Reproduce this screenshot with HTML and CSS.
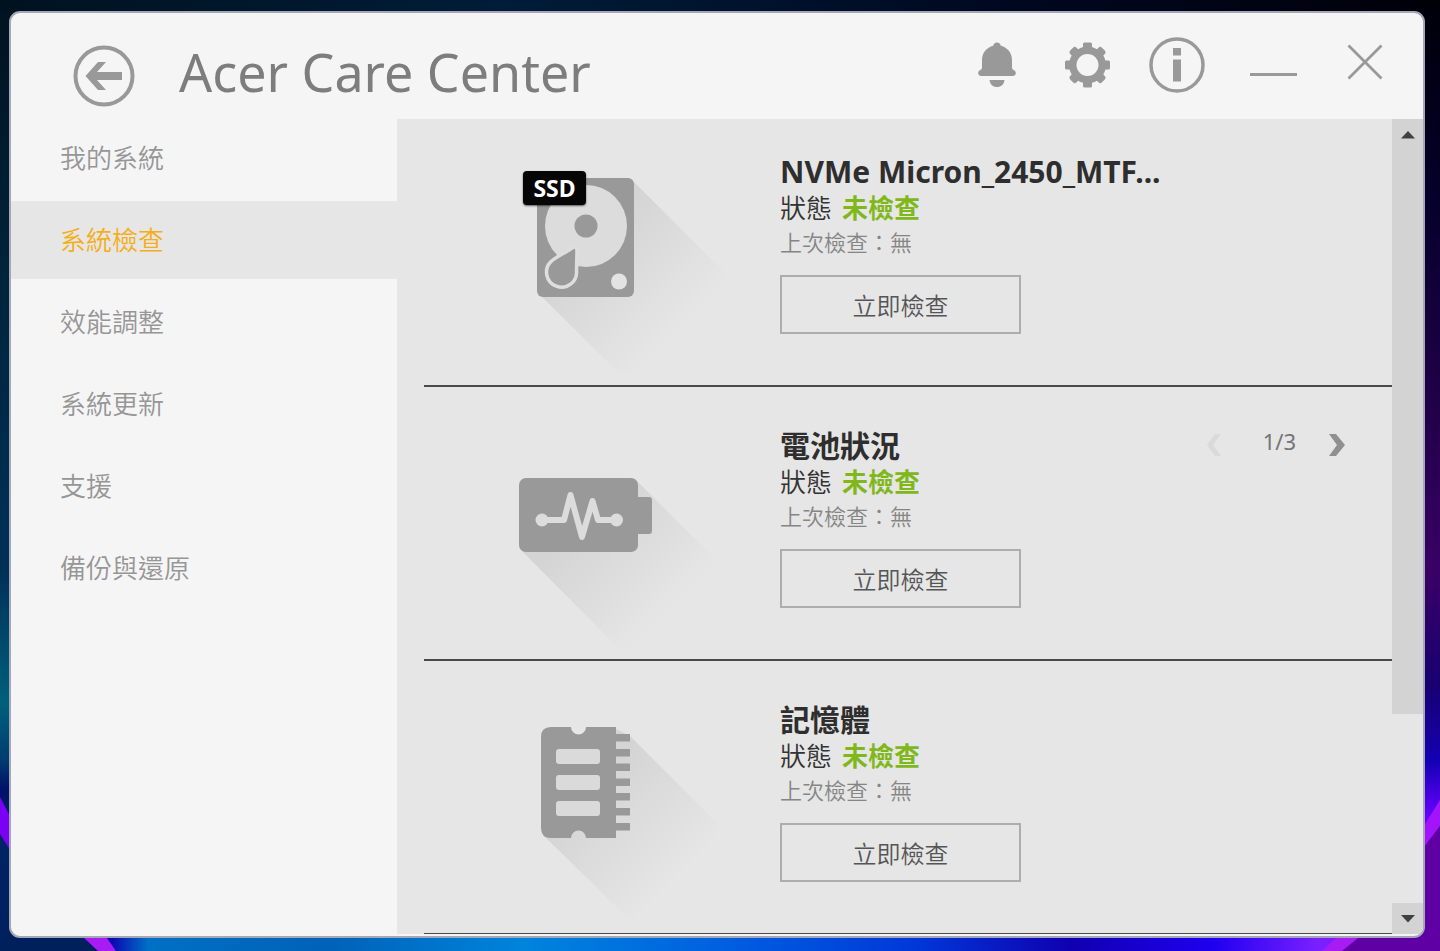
FILE: index.html
```html
<!DOCTYPE html>
<html lang="zh-Hant">
<head>
    <meta charset="UTF-8">
    <meta name="viewport" content="width=device-width, initial-scale=1.0">
    <title>Acer Care Center</title>
    <link rel="stylesheet" href="styles.css">
</head>
<body>
    <!-- Desktop wallpaper -->
    <svg class="wallpaper" viewBox="0 0 1440 951" preserveAspectRatio="none" aria-hidden="true">
        <defs>
            <linearGradient id="wallLeft" x1="0" y1="0" x2="0" y2="1">
                <stop offset="0" stop-color="#00121f"/>
                <stop offset="0.3" stop-color="#00243c"/>
                <stop offset="0.6" stop-color="#003058"/>
                <stop offset="0.74" stop-color="#00607c"/>
                <stop offset="0.8" stop-color="#003c70"/>
                <stop offset="0.83" stop-color="#00106a"/>
                <stop offset="0.86" stop-color="#002468"/>
                <stop offset="1" stop-color="#00205c"/>
            </linearGradient>
            <linearGradient id="wallRight" x1="0" y1="0" x2="0" y2="1">
                <stop offset="0" stop-color="#000008"/>
                <stop offset="0.2" stop-color="#04002a"/>
                <stop offset="0.45" stop-color="#24004c"/>
                <stop offset="0.6" stop-color="#3a0066"/>
                <stop offset="0.72" stop-color="#180070"/>
                <stop offset="0.8" stop-color="#1400b4"/>
                <stop offset="0.86" stop-color="#6a00ff"/>
                <stop offset="1" stop-color="#5c00a0"/>
            </linearGradient>
            <linearGradient id="wallTop" x1="0" y1="0" x2="1" y2="0">
                <stop offset="0" stop-color="#00121f"/>
                <stop offset="0.35" stop-color="#001c38"/>
                <stop offset="0.7" stop-color="#000820"/>
                <stop offset="1" stop-color="#000008"/>
            </linearGradient>
            <linearGradient id="wallBottom" x1="0" y1="0" x2="1" y2="0">
                <stop offset="0.03" stop-color="#0c00b0"/>
                <stop offset="0.06" stop-color="#0070c4"/>
                <stop offset="0.2" stop-color="#0062b8"/>
                <stop offset="0.35" stop-color="#0084dc"/>
                <stop offset="0.5" stop-color="#0060e0"/>
                <stop offset="0.65" stop-color="#0038d8"/>
                <stop offset="0.77" stop-color="#1000b0"/>
                <stop offset="0.88" stop-color="#2000f0"/>
                <stop offset="0.96" stop-color="#7a20ff"/>
            </linearGradient>
        </defs>
        <rect width="720" height="951" fill="url(#wallLeft)"/>
        <rect x="720" width="720" height="951" fill="url(#wallRight)"/>
        <rect width="1440" height="13" fill="url(#wallTop)"/>
        <path d="M70 925H1370L1338 951H98Z" fill="url(#wallBottom)"/>
        <path d="M0 797L14 824V856L0 834Z" fill="#7c00f4"/>
        <path d="M70 925H98L116 951H98Z" fill="#a81cf4"/>
        <path d="M1440 800L1420 832V856L1440 826Z" fill="#a414fa"/>
        <path d="M1440 826L1420 852V925H1362L1336 951H1440Z" fill="#5e00a4"/>
        <path d="M1350 925H1374L1342 951H1322Z" fill="#a81cf4"/>
    </svg>

    <div class="window">
        <header class="titlebar">
            <button class="back" type="button" aria-label="返回">
                <svg viewBox="0 0 62 62" width="62" height="62">
                    <circle cx="31" cy="31" r="28.5" fill="none" stroke="#999" stroke-width="4"/>
                    <path d="M12.5 31L25 17H33L24 27H49V35H24L33 45H25Z" fill="#999"/>
                </svg>
            </button>
            <h1 class="app-title">Acer Care Center</h1>
            <div class="tools">
                <button class="tool" type="button" aria-label="通知">
                    <svg viewBox="0 0 56 56" width="56" height="56" fill="#999">
                        <path d="M28 5.500C30.200 5.500 31.500 7 31.800 8.800C38.500 10.500 43 16 43 23V30.500C43 31.800 43.600 32.500 44.600 33C46 33.700 46.800 34.800 46.800 36C46.800 37.800 45.500 39 43.600 39H12.400C10.500 39 9.200 37.800 9.200 36C9.200 34.800 10 33.700 11.400 33C12.400 32.500 13 31.800 13 30.500V23C13 16 17.500 10.500 24.200 8.800C24.500 7 25.800 5.500 28 5.500Z"/>
                        <path d="M20.500 43H35.500C35 47.500 32 50 28 50S21 47.500 20.500 43Z"/>
                    </svg>
                </button>
                <button class="tool" type="button" aria-label="設定">
                    <svg viewBox="0 0 56 56" width="56" height="56">
                        <g fill="#999">
                            <circle cx="28.500" cy="28" r="18.500"/>
                            <rect x="24" y="5.500" width="9" height="45" rx="1.500"/>
                            <rect x="6" y="23.500" width="45" height="9" rx="1.500"/>
                            <rect x="24" y="5.500" width="9" height="45" rx="2.500" transform="rotate(45 28.500 28)"/>
                            <rect x="24" y="5.500" width="9" height="45" rx="2.500" transform="rotate(-45 28.500 28)"/>
                        </g>
                        <circle cx="28.500" cy="28" r="11" fill="#f5f5f5"/>
                    </svg>
                </button>
                <button class="tool" type="button" aria-label="關於">
                    <svg viewBox="0 0 56 56" width="56" height="56">
                        <circle cx="28" cy="28" r="26" fill="none" stroke="#999" stroke-width="3.500"/>
                        <path d="M24 11H32V18.500H24ZM24 22.500H32V44.500H24Z" fill="#999"/>
                    </svg>
                </button>
            </div>
            <div class="window-controls">
                <button class="tool" type="button" aria-label="最小化">
                    <svg viewBox="0 0 56 56" width="56" height="56">
                        <path d="M5 37.500H52" stroke="#999" stroke-width="3"/>
                    </svg>
                </button>
                <button class="tool" type="button" aria-label="關閉">
                    <svg viewBox="0 0 56 56" width="56" height="56">
                        <path d="M11.500 8.500L44.500 41.500M44.500 8.500L11.500 41.500" stroke="#999" stroke-width="2.800"/>
                    </svg>
                </button>
            </div>
        </header>

        <div class="body">
            <nav class="sidebar">
                <a class="nav-item" href="#">我的系統</a>
                <a class="nav-item active" href="#">系統檢查</a>
                <a class="nav-item" href="#">效能調整</a>
                <a class="nav-item" href="#">系統更新</a>
                <a class="nav-item" href="#">支援</a>
                <a class="nav-item" href="#">備份與還原</a>
            </nav>

            <main class="content">
                <div class="device-list">
                    <section class="device">
                        <div class="art">
                            <svg viewBox="0 0 240 220" width="240" height="220">
                                <defs>
                                    <linearGradient id="shadow" gradientUnits="userSpaceOnUse" x1="75" y1="85" x2="168" y2="178">
                                        <stop offset="0" stop-color="#000" stop-opacity="0.08"/>
                                        <stop offset="1" stop-color="#000" stop-opacity="0"/>
                                    </linearGradient>
                                </defs>
                                <path d="M122 26L222 126L128 238L29 140Z" fill="url(#shadow)"/>
                                <rect x="27" y="24" width="97" height="119" rx="6" fill="#999"/>
                                <circle cx="76" cy="72" r="41" fill="#dcdcdc"/>
                                <circle cx="76" cy="72" r="11.500" fill="#999"/>
                                <path d="M61.500 94.500C64 92 67 93 67 96.500L66.500 117A15 15 0 1 1 41 107.500C46 103 55 99 61.500 94.500Z" fill="#999" stroke="#dedede" stroke-width="3.500"/>
                                <circle cx="109" cy="127.500" r="8" fill="#e3e3e3"/>
                            </svg>
                            <span class="badge">SSD</span>
                        </div>
                        <div class="info">
                            <h2 class="name">NVMe Micron_2450_MTF...</h2>
                            <p class="status">狀態 <strong>未檢查</strong></p>
                            <p class="last">上次檢查：無</p>
                            <button class="check" type="button">立即檢查</button>
                        </div>
                    </section>

                    <section class="device">
                        <div class="art">
                            <svg viewBox="0 0 240 220" width="240" height="220">
                                <path d="M125 51L142 68L210 136L128 240L11 122Z" fill="url(#shadow)"/>
                                <rect x="9" y="50" width="119" height="74" rx="7" fill="#999"/>
                                <path d="M126 69H139Q142 69 142 72V103Q142 106 139 106H126Z" fill="#999"/>
                                <path d="M32 92H54L60.500 67L72 109L82.500 73L88 92H106" fill="none" stroke="#dcdcdc" stroke-width="6" stroke-linejoin="round"/>
                                <circle cx="32" cy="92" r="6.500" fill="#dcdcdc"/>
                                <circle cx="106.500" cy="92" r="6.500" fill="#dcdcdc"/>
                            </svg>
                        </div>
                        <div class="info">
                            <h2 class="name">電池狀況</h2>
                            <p class="status">狀態 <strong>未檢查</strong></p>
                            <p class="last">上次檢查：無</p>
                            <button class="check" type="button">立即檢查</button>
                        </div>
                        <div class="pager">
                            <button class="page-btn" type="button" aria-label="上一個" disabled>
                                <svg viewBox="0 0 16 24" width="16" height="24"><path d="M9 1H15L7 12L15 23H9L1 12Z" fill="#dadada"/></svg>
                            </button>
                            <span class="page-number">1/3</span>
                            <button class="page-btn" type="button" aria-label="下一個">
                                <svg viewBox="0 0 16 24" width="16" height="24"><path d="M0 1H7L16 12L7 23H0L8 12Z" fill="#909090"/></svg>
                            </button>
                        </div>
                    </section>

                    <section class="device">
                        <div class="art">
                            <svg viewBox="0 0 240 220" width="240" height="220">
                                <path d="M104 26L120 34L220 134L128 226L34 134Z" fill="url(#shadow)"/>
                                <path d="M41 25H61A7.500 7.500 0 0 0 76 25H106V136H76A7.500 7.500 0 0 0 61 136H41Q31 136 31 126V35Q31 25 41 25Z" fill="#999"/>
                                <path d="M105 32h15v7.500h-15zM105 47h15v7.500h-15zM105 61.500h15v7.500h-15zM105 76.500h15v7.500h-15zM105 91h15v7.500h-15zM105 106h15v7.500h-15zM105 121h15v7.500h-15z" fill="#999"/>
                                <g fill="#dadada">
                                    <rect x="46" y="47" width="44" height="15" rx="3"/>
                                    <rect x="46" y="73" width="44" height="15" rx="3"/>
                                    <rect x="46" y="99" width="44" height="15" rx="3"/>
                                </g>
                            </svg>
                        </div>
                        <div class="info">
                            <h2 class="name">記憶體</h2>
                            <p class="status">狀態 <strong>未檢查</strong></p>
                            <p class="last">上次檢查：無</p>
                            <button class="check" type="button">立即檢查</button>
                        </div>
                    </section>
                </div>

                <div class="scrollbar">
                    <div class="thumb">
                        <button class="scroll-btn" type="button" aria-label="向上捲動">
                            <svg viewBox="0 0 14 8" width="14" height="8"><path d="M0 7.500L7 0L14 7.500Z" fill="#404040"/></svg>
                        </button>
                    </div>
                    <button class="scroll-btn" type="button" aria-label="向下捲動">
                        <svg viewBox="0 0 14 8" width="14" height="8"><path d="M0 0L7 7.500L14 0Z" fill="#404040"/></svg>
                    </button>
                </div>
            </main>
        </div>
    </div>
</body>
</html>
```
FILE: styles.css
```css
* {
    box-sizing: border-box;
}

body {
    margin: 0;
    height: 100vh;
    padding: 11px 15px 13px 9px;
    background-color: #00121f;
    font-family: "Noto Sans", "Noto Sans CJK TC", sans-serif;
    color: #333;
    overflow: hidden;
}

button {
    padding: 0;
    border: none;
    background: none;
    font-family: inherit;
    cursor: pointer;
}

svg {
    display: block;
}

.wallpaper {
    position: absolute;
    top: 0;
    left: 0;
    width: 100%;
    height: 100%;
    z-index: -1;
}

.window {
    display: flex;
    flex-direction: column;
    height: 100%;
    border: 2px solid #a4a8b6;
    border-radius: 11px;
    background-color: #f5f5f5;
    overflow: hidden;
}

/* Title bar */
.titlebar {
    display: flex;
    align-items: flex-start;
    height: 106px;
    flex-shrink: 0;
    padding: 24px 30px 0 62px;
}

.back {
    margin-top: 8px;
}

.app-title {
    flex: 1;
    margin: 0 0 0 44px;
    font-size: 52px;
    font-weight: 400;
    line-height: 70px;
    color: #7d7d7d;
    white-space: nowrap;
}

.tools {
    display: flex;
    gap: 34px;
    margin-right: 40px;
}

.window-controls {
    display: flex;
    gap: 36px;
}

/* Sidebar */
.body {
    display: flex;
    flex: 1;
    min-height: 0;
}

.sidebar {
    display: flex;
    flex-direction: column;
    gap: 4px;
    width: 386px;
    flex-shrink: 0;
}

.nav-item {
    padding-left: 49px;
    font-size: 26px;
    font-weight: 350;
    line-height: 78px;
    color: #969696;
    text-decoration: none;
}

.nav-item.active {
    background-color: #e6e6e6;
    color: #f5ae1a;
}

/* Device list */
.content {
    display: flex;
    flex: 1;
    min-width: 0;
    margin-bottom: 2px;
    background-color: #e6e6e6;
}

.device-list {
    flex: 1;
    min-width: 0;
    padding-left: 27px;
    overflow: hidden auto;
    scrollbar-width: none;
}

.device {
    display: grid;
    grid-template-columns: 356px 1fr auto;
    padding-top: 41px;
    border-bottom: 2px solid #4a4a4a;
}

.device:first-child {
    padding-top: 35px;
}

.art {
    position: relative;
    padding-left: 86px;
}

.badge {
    position: absolute;
    top: 17px;
    left: 99px;
    width: 63px;
    border-radius: 4px;
    background-color: #060606;
    box-shadow: 0 1px 2px rgba(0, 0, 0, 0.6);
    color: #fff;
    font-size: 23px;
    font-weight: 700;
    line-height: 34px;
    text-align: center;
}

.info {
    padding-bottom: 51px;
    white-space: nowrap;
}

.name {
    margin: 0;
    font-size: 30px;
    font-weight: 700;
    line-height: 36px;
    color: #2e2e2e;
}

.status {
    display: flex;
    gap: 10px;
    margin: 0;
    font-size: 26px;
    font-weight: 350;
    line-height: 36px;
}

.status strong {
    font-weight: 700;
    color: #80b81c;
}

.last {
    margin: 0 0 16px;
    font-size: 22px;
    font-weight: 350;
    line-height: 33px;
    color: #858585;
}

.check {
    display: block;
    width: 241px;
    height: 59px;
    border: 2px solid #adadad;
    font-size: 24px;
    font-weight: 350;
    color: #555;
}

.pager {
    display: flex;
    align-items: flex-start;
    gap: 33px;
    margin-right: 47px;
    padding-top: 5px;
    font-size: 22px;
    color: #757575;
}

.page-btn:first-child {
    margin-right: 8px;
}

.page-number {
    line-height: 16px;
}

/* Scrollbar */
.scrollbar {
    display: flex;
    flex-direction: column;
    justify-content: space-between;
    width: 31px;
    flex-shrink: 0;
}

.thumb {
    height: 73%;
    background-color: #d3d3d3;
}

.scroll-btn {
    display: flex;
    align-items: center;
    justify-content: center;
    width: 31px;
    height: 31px;
    background-color: #d3d3d3;
}
```
